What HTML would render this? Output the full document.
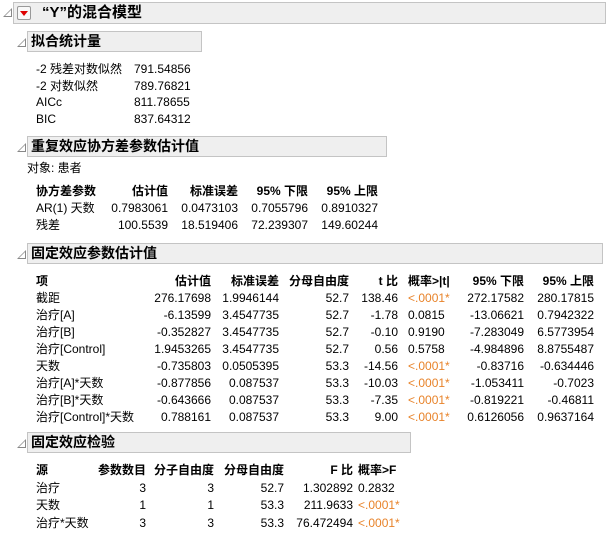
<!DOCTYPE html>
<html><head><meta charset="utf-8"><style>
body{margin:0;width:606px;height:534px;background:#fff;position:relative;overflow:hidden;font-family:"Liberation Sans","Noto Sans CJK SC",sans-serif;font-size:12px;color:#000}
.a{position:absolute;white-space:nowrap;line-height:17px}
.b{font-weight:bold}
.o{color:#e8832a}
.hdr{position:absolute;background:#efefef;border:1px solid #c4c4c4;box-sizing:border-box;font-weight:bold;font-size:14px;line-height:19px;padding-left:3px}
.tri{position:absolute;width:0;height:0;border-left:9px solid transparent;border-bottom:9px solid #888}
.tri:after{content:"";position:absolute;left:-7px;top:2px;border-left:6px solid transparent;border-bottom:6px solid #fff}
</style></head><body>
<div class="tri" style="left:3px;top:8px"></div>
<div class="hdr" style="left:13px;top:2px;width:593px;height:22px;padding-left:28px;font-size:15px;line-height:20px">“Y”的混合模型</div>
<div style="position:absolute;left:17px;top:6px;width:12px;height:12px;border:1px solid #999;border-radius:2px;background:#f8f8f8"><div style="position:absolute;left:2px;top:4px;border-left:4px solid transparent;border-right:4px solid transparent;border-top:5px solid #d00"></div></div>

<div class="tri" style="left:17px;top:38px"></div>
<div class="hdr" style="left:27px;top:31px;width:175px;height:21px">拟合统计量</div>
<div class="a" style="left:36px;top:61px">-2 残差对数似然</div><div class="a" style="left:134px;top:61px">791.54856</div>
<div class="a" style="left:36px;top:78px">-2 对数似然</div><div class="a" style="left:134px;top:78px">789.76821</div>
<div class="a" style="left:36px;top:94px">AICc</div><div class="a" style="left:134px;top:94px">811.78655</div>
<div class="a" style="left:36px;top:111px">BIC</div><div class="a" style="left:134px;top:111px">837.64312</div>

<div class="tri" style="left:17px;top:143px"></div>
<div class="hdr" style="left:27px;top:136px;width:360px;height:21px">重复效应协方差参数估计值</div>
<div class="a" style="left:27px;top:160px">对象: 患者</div>
<div class="a b" style="left:36px;top:183px">协方差参数</div>
<div class="a b" style="right:438px;top:183px">估计值</div>
<div class="a b" style="right:368px;top:183px">标准误差</div>
<div class="a b" style="right:298px;top:183px">95% 下限</div>
<div class="a b" style="right:228px;top:183px">95% 上限</div>
<div class="a" style="left:36px;top:200px">AR(1) 天数</div>
<div class="a" style="right:438px;top:200px">0.7983061</div><div class="a" style="right:368px;top:200px">0.0473103</div><div class="a" style="right:298px;top:200px">0.7055796</div><div class="a" style="right:228px;top:200px">0.8910327</div>
<div class="a" style="left:36px;top:217px">残差</div>
<div class="a" style="right:438px;top:217px">100.5539</div><div class="a" style="right:368px;top:217px">18.519406</div><div class="a" style="right:298px;top:217px">72.239307</div><div class="a" style="right:228px;top:217px">149.60244</div>

<div class="tri" style="left:17px;top:250px"></div>
<div class="hdr" style="left:27px;top:243px;width:576px;height:21px">固定效应参数估计值</div>
<div id="t4"></div>

<div class="tri" style="left:17px;top:439px"></div>
<div class="hdr" style="left:27px;top:432px;width:384px;height:21px">固定效应检验</div>
<div id="t5"></div>
<script>
(function(){
var R=[395,327,257,208,(0),82,12],L=408;
var rows=[["项","估计值","标准误差","分母自由度","t 比","概率>|t|","95% 下限","95% 上限"],
["截距","276.17698","1.9946144","52.7","138.46","<.0001*","272.17582","280.17815"],
["治疗[A]","-6.13599","3.4547735","52.7","-1.78","0.0815","-13.06621","0.7942322"],
["治疗[B]","-0.352827","3.4547735","52.7","-0.10","0.9190","-7.283049","6.5773954"],
["治疗[Control]","1.9453265","3.4547735","52.7","0.56","0.5758","-4.984896","8.8755487"],
["天数","-0.735803","0.0505395","53.3","-14.56","<.0001*","-0.83716","-0.634446"],
["治疗[A]*天数","-0.877856","0.087537","53.3","-10.03","<.0001*","-1.053411","-0.7023"],
["治疗[B]*天数","-0.643666","0.087537","53.3","-7.35","<.0001*","-0.819221","-0.46811"],
["治疗[Control]*天数","0.788161","0.087537","53.3","9.00","<.0001*","0.6126056","0.9637164"]];
var rr=[395,327,257,208,null,82,12];
var h="";
rows.forEach(function(r,i){var t=273+i*17-(i>0?0:0);var b=i==0?" b":"";
h+='<div class="a'+b+'" style="left:36px;top:'+t+'px">'+r[0]+'</div>';
for(var c=1;c<8;c++){var v=r[c];if(c==5){var o=(v.indexOf("<")==0)?" o":"";h+='<div class="a'+b+o+'" style="left:'+L+'px;top:'+t+'px">'+v.replace("<","&lt;")+'</div>';}
else h+='<div class="a'+b+'" style="right:'+rr[c-1]+'px;top:'+t+'px">'+v+'</div>';}
});
document.getElementById("t4").innerHTML=h;
var r5=[["源","参数数目","分子自由度","分母自由度","F 比","概率>F"],["治疗","3","3","52.7","1.302892","0.2832"],["天数","1","1","53.3","211.9633","<.0001*"],["治疗*天数","3","3","53.3","76.472494","<.0001*"]];
var rr5=[460,392,322,253];h="";
r5.forEach(function(r,i){var t=462+i*17.5;var b=i==0?" b":"";
h+='<div class="a'+b+'" style="left:36px;top:'+t+'px">'+r[0]+'</div>';
for(var c=1;c<5;c++)h+='<div class="a'+b+'" style="right:'+rr5[c-1]+'px;top:'+t+'px">'+r[c]+'</div>';
var v=r[5];var o=v.indexOf("<")==0?" o":"";
h+='<div class="a'+b+o+'" style="left:358px;top:'+t+'px">'+v.replace("<","&lt;")+'</div>';});
document.getElementById("t5").innerHTML=h;
})();
</script>
</body></html>
